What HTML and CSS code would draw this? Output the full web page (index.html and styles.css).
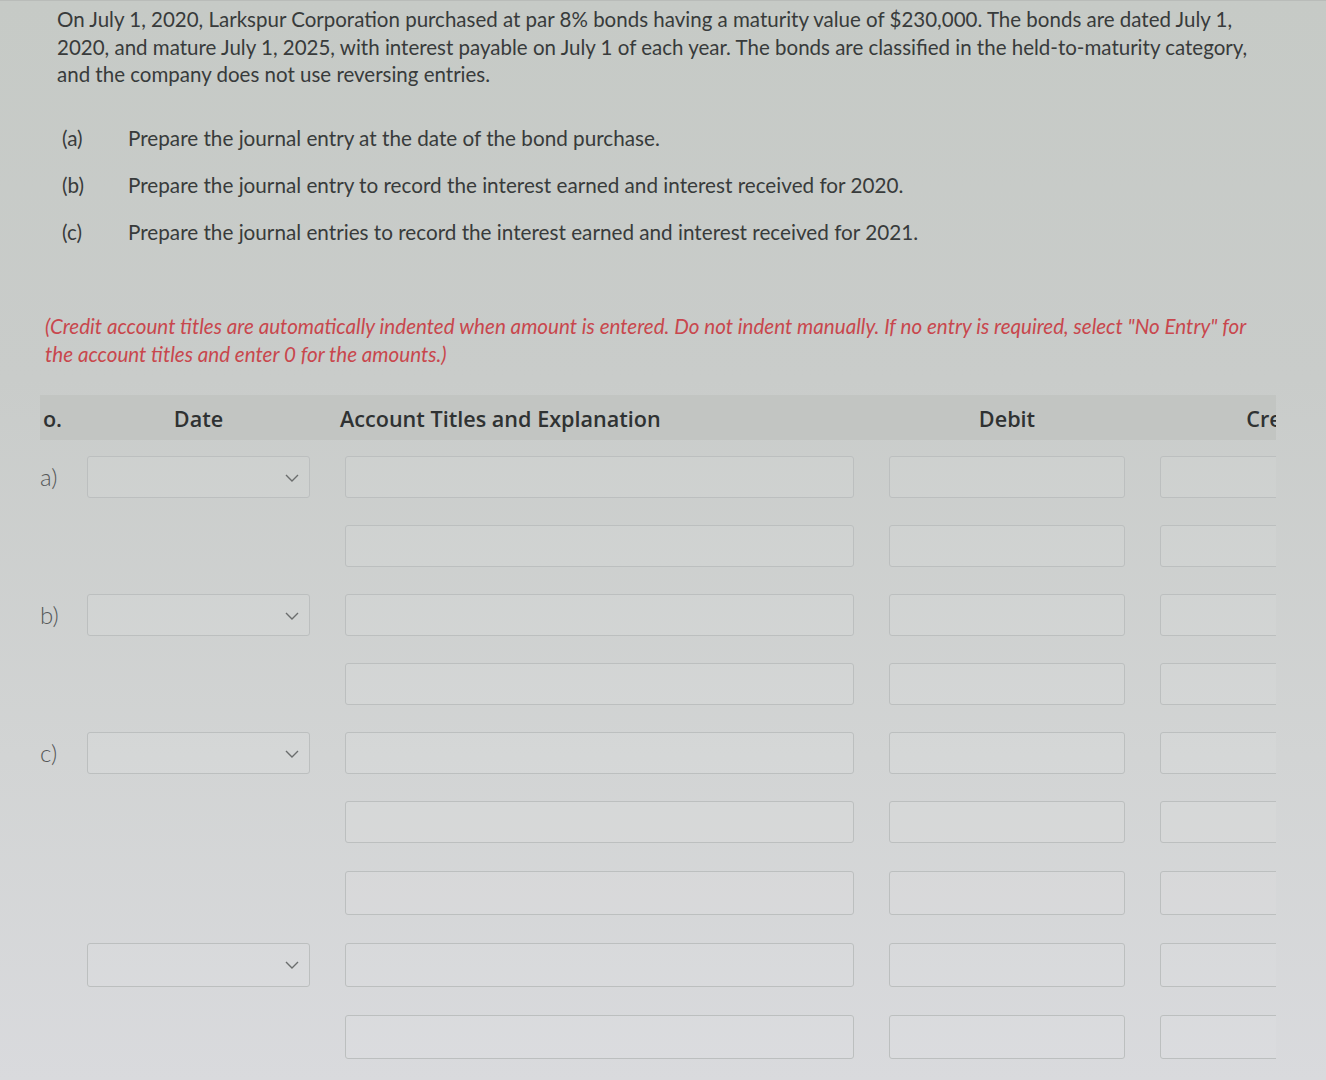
FILE: index.html
```html
<!DOCTYPE html>
<html lang="en">
<head>
<meta charset="utf-8">
<title>Journal entries</title>
<link rel="stylesheet" href="styles.css">
</head>
<body>
<main class="page">
  <p class="intro">On July 1, 2020, Larkspur Corporation purchased at par 8% bonds having a maturity value of $230,000. The bonds are dated July 1, 2020, and mature July 1, 2025, with interest payable on July 1 of each year. The bonds are classified in the held-to-maturity category, and the company does not use reversing entries.</p>

  <ol class="parts">
    <li><span class="tag">(a)</span><span class="text">Prepare the journal entry at the date of the bond purchase.</span></li>
    <li><span class="tag">(b)</span><span class="text">Prepare the journal entry to record the interest earned and interest received for 2020.</span></li>
    <li><span class="tag">(c)</span><span class="text">Prepare the journal entries to record the interest earned and interest received for 2021.</span></li>
  </ol>

  <p class="note">(Credit account titles are automatically indented when amount is entered. Do not indent manually. If no entry is required, select "No Entry" for the account titles and enter 0 for the amounts.)</p>

  <section class="journal">
    <div class="jhead">
      <div class="hno"><span>No.</span></div>
      <div class="hcenter">Date</div>
      <div class="hleft">Account Titles and Explanation</div>
      <div class="hcenter">Debit</div>
      <div class="hcenter">Credit</div>
    </div>

    <div class="jrow first">
      <div class="rlabel">a)</div>
      <div class="field select"><svg class="chev" viewBox="0 0 14 8" width="14" height="8"><path d="M1 1 L7 7 L13 1" /></svg></div>
      <div class="field"></div><div class="field"></div><div class="field"></div>
    </div>
    <div class="jrow">
      <div class="rlabel"></div><div class="blank"></div>
      <div class="field"></div><div class="field"></div><div class="field"></div>
    </div>
    <div class="jrow">
      <div class="rlabel">b)</div>
      <div class="field select"><svg class="chev" viewBox="0 0 14 8" width="14" height="8"><path d="M1 1 L7 7 L13 1" /></svg></div>
      <div class="field"></div><div class="field"></div><div class="field"></div>
    </div>
    <div class="jrow">
      <div class="rlabel"></div><div class="blank"></div>
      <div class="field"></div><div class="field"></div><div class="field"></div>
    </div>
    <div class="jrow">
      <div class="rlabel">c)</div>
      <div class="field select"><svg class="chev" viewBox="0 0 14 8" width="14" height="8"><path d="M1 1 L7 7 L13 1" /></svg></div>
      <div class="field"></div><div class="field"></div><div class="field"></div>
    </div>
    <div class="jrow">
      <div class="rlabel"></div><div class="blank"></div>
      <div class="field"></div><div class="field"></div><div class="field"></div>
    </div>
    <div class="jrow tall">
      <div class="rlabel"></div><div class="blank"></div>
      <div class="field"></div><div class="field"></div><div class="field"></div>
    </div>
    <div class="jrow tall">
      <div class="rlabel"></div>
      <div class="field select"><svg class="chev" viewBox="0 0 14 8" width="14" height="8"><path d="M1 1 L7 7 L13 1" /></svg></div>
      <div class="field"></div><div class="field"></div><div class="field"></div>
    </div>
    <div class="jrow tall">
      <div class="rlabel"></div><div class="blank"></div>
      <div class="field"></div><div class="field"></div><div class="field"></div>
    </div>
  </section>
</main>
</body>
</html>
```

FILE: styles.css
```css
html, body {
  margin: 0;
  padding: 0;
}

body {
  width: 1326px;
  height: 1080px;
  overflow: hidden;
  background: linear-gradient(180deg, #c6cac6 0%, #c9ccca 35%, #d2d4d4 70%, #d9dadd 100%);
  font-family: Lato, "Open Sans", sans-serif;
  color: #383b3b;
}

.page {
  padding-top: 5px;
  border-top: 1px solid #b9bcb9;
}

.intro {
  margin: 0 0 0 57px;
  width: 1208px;
  font-size: 20.5px;
  line-height: 27.5px;
}

.parts {
  list-style: none;
  margin: 36px 0 0 62px;
  padding: 0;
}

.parts li {
  display: flex;
  height: 27px;
  line-height: 27px;
  font-size: 20.7px;
  margin-bottom: 20px;
}

.parts li:last-child {
  margin-bottom: 0;
}

.tag {
  width: 66px;
  flex: none;
}

.note {
  margin: 66px 0 0 45px;
  width: 1222px;
  color: #c8474d;
  font-style: italic;
  font-size: 20.6px;
  line-height: 28px;
}

.journal {
  margin: 27px 0 0 40px;
  width: 1236px;
  overflow: hidden;
}

.jhead,
.jrow {
  display: grid;
  grid-template-columns: 12px 223px 509px 236px 236px;
  column-gap: 35px;
}

.jhead {
  height: 45px;
  box-sizing: border-box;
  padding-top: 3px;
  align-items: center;
  background: #c2c5c2;
  font-family: "Open Sans", Lato, sans-serif;
  font-weight: 600;
  font-size: 21.6px;
  color: #2f3232;
}

.hno {
  margin-left: 3px;
  width: 30px;
  overflow: hidden;
  white-space: nowrap;
}

.hno span {
  margin-left: -17px;
}

.hcenter {
  text-align: center;
}

.hleft {
  text-align: left;
  margin-left: -5px;
}

.jrow {
  height: 42px;
  margin-top: 27px;
  align-items: center;
}

.jrow.first {
  margin-top: 16px;
}

.jrow.tall {
  height: 44px;
  margin-top: 28px;
}

.jrow.tall .field {
  height: 44px;
}

.rlabel {
  white-space: nowrap;
  font-size: 24px;
  font-weight: 300;
  color: #555858;
}

.field {
  box-sizing: border-box;
  height: 42px;
  border: 1px solid #bcbfbf;
  border-radius: 3px;
  background: rgba(255, 255, 255, 0.07);
}

.select {
  position: relative;
}

.chev {
  position: absolute;
  right: 10px;
  top: 17px;
  fill: none;
  stroke: #6a6d6d;
  stroke-width: 1.4;
}
```
